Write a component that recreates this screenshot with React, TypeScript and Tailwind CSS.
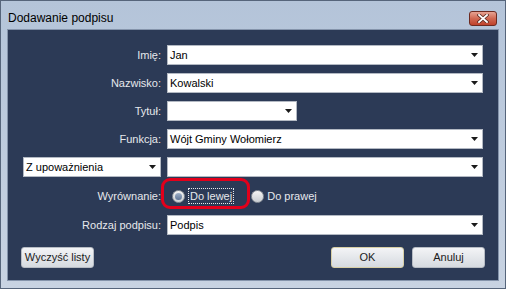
import React from 'react';

const font = { fontFamily: '"Liberation Sans", Arial, sans-serif' };

function Arrow() {
  return (
    <svg width="7" height="4" viewBox="0 0 7 4" className="shrink-0">
      <path d="M0 0h7L3.5 4z" fill="#1a1a1a" />
    </svg>
  );
}

function Combo({ value, className = '' }: { value: string; className?: string }) {
  return (
    <div
      className={`h-[20px] bg-white border border-[#b3b9c3] flex items-center justify-between pl-[2px] pr-[4px] text-[11px] text-black ${className}`}
    >
      <span>{value}</span>
      <Arrow />
    </div>
  );
}

function Label({ text }: { text: string }) {
  return <div className="text-right text-[11px] text-[#e6e8ec] leading-[20px]">{text}</div>;
}

function Radio({ checked }: { checked?: boolean }) {
  return (
    <div className="w-[13px] h-[13px] rounded-full border border-[#8e949c] bg-gradient-to-b from-[#f4f4f4] to-[#c9cdd2] flex items-center justify-center shrink-0">
      {checked && <div className="w-[7px] h-[7px] rounded-full bg-gradient-to-b from-[#9fb0c8] to-[#5f7597]" />}
    </div>
  );
}

function Button({ text, primary }: { text: string; primary?: boolean }) {
  return (
    <div
      className={`h-[21px] w-[73px] rounded-[3px] border ${primary ? 'border-[#d8cfa6]' : 'border-[#b7bcc4]'} bg-gradient-to-b from-[#f3f4f6] to-[#d6dae0] flex items-center justify-center text-[11px] text-[#1b1b1b]`}
    >
      {text}
    </div>
  );
}

export default function App() {
  return (
    <div style={font} className="w-[506px] h-[289px] border border-[#56657b] bg-gradient-to-b from-[#b4c4d9] to-[#c8d3e2] flex flex-col">
      <div className="h-[28px] flex items-center justify-between pl-[7px] pr-[8px] shrink-0">
        <span className="text-[12px] text-black mt-[5px]">Dodawanie podpisu</span>
        <div className="w-[28px] h-[15px] mt-[6px] rounded-[3px] border border-[#6d2a20] bg-gradient-to-b from-[#e6a393] via-[#d06852] to-[#bf412b] flex items-center justify-center">
          <svg width="12" height="9" viewBox="0 0 12 9">
            <path d="M2 1l8 7M10 1L2 8" stroke="#5a2a22" strokeWidth="3.4" strokeLinecap="square" />
            <path d="M2 1l8 7M10 1L2 8" stroke="#ffffff" strokeWidth="1.8" strokeLinecap="square" />
          </svg>
        </div>
      </div>
      <div className="mx-[6px] h-[252px] bg-[#2c3a56] border border-[#8594ab] pt-[15px] px-[13px] flex flex-col">
        <div className="grid grid-cols-[138px_316px] gap-x-[6px] gap-y-[8px] pl-[2px]">
          <Label text="Imię:" />
          <Combo value="Jan" />
          <Label text="Nazwisko:" />
          <Combo value="Kowalski" />
          <Label text="Tytuł:" />
          <Combo value="" className="w-[130px]" />
          <Label text="Funkcja:" />
          <Combo value="Wójt Gminy Wołomierz" />
          <Combo value="Z upoważnienia" />
          <Combo value="" />
          <div className="text-right text-[11px] text-[#e6e8ec] leading-[22px] h-[22px]">Wyrównanie:</div>
          <div className="relative h-[22px] flex items-center">
            <div className="absolute left-[-6px] top-[-7px] w-[89px] h-[31px] border-[3px] border-[#e3001b] rounded-[9px]" />
            <div className="flex items-center ml-[5px] gap-[3px]">
              <Radio checked />
              <span className="text-[11px] text-[#e6e8ec] border border-dotted border-[#e6e8ec] px-[1px] leading-[14px] whitespace-nowrap">Do lewej</span>
            </div>
            <div className="flex items-center ml-[17px] gap-[3px]">
              <Radio />
              <span className="text-[11px] text-[#e6e8ec]">Do prawej</span>
            </div>
          </div>
          <Label text="Rodzaj podpisu:" />
          <Combo value="Podpis" />
        </div>
        <div className="flex items-center mt-[12px]">
          <Button text="Wyczyść listy" />
          <div className="flex-1" />
          <Button text="OK" primary />
          <div className="w-[8px]" />
          <Button text="Anuluj" />
        </div>
      </div>
    </div>
  );
}
